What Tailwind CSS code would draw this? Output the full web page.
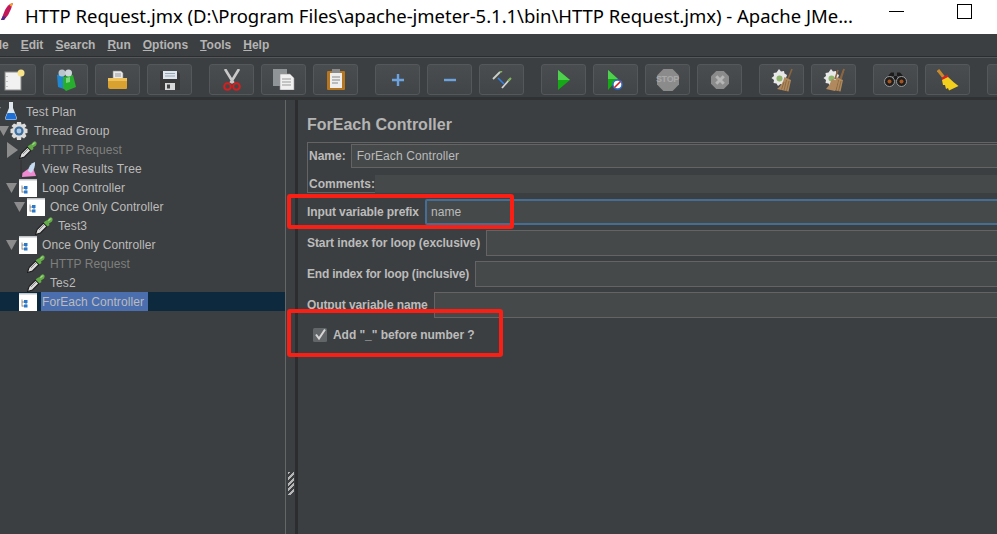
<!DOCTYPE html>
<html lang="en">
<head>
  <meta charset="UTF-8">
  <title>HTTP Request.jmx - Apache JMeter</title>
  <script src="https://cdn.jsdelivr.net/npm/@tailwindcss/browser@4"></script>
</head>
<body class="relative w-[997px] h-[534px] overflow-hidden bg-[#3c3f41] font-['Liberation_Sans',sans-serif] text-[12px] text-[#bbbbbb]">

  <!-- shared icons -->
  <svg class="hidden">
    <symbol id="dropper" viewBox="0 0 18 18">
      <path d="M0.5 17.5 L2 12.5 L8.5 6 L12 9.5 L5.5 16 Z" fill="#dcdcdc" stroke="#1c1c1c" stroke-width="1.1"/>
      <path d="M4 13 L9 8" stroke="#8e8e8e" stroke-width="1"/>
      <path d="M8.5 5.5 L12.5 9.5 L14.5 8 L14 6.5 L17 4.5 Q18.5 1.5 16.5 0.5 Q14.5 -0.3 12.5 3 L10.5 4 Z" fill="#62ab47"/>
      <path d="M13.5 4 Q14.5 2 16.3 1.8" stroke="#a8dc90" stroke-width="1.1" fill="none"/>
    </symbol>
    <symbol id="ctrl" viewBox="0 0 18 18">
      <rect x="0" y="0" width="18" height="18" fill="#ffffff"/>
      <rect x="0" y="0" width="18" height="1.5" fill="#bfc3c6"/>
      <path d="M3 6.5 V13.5 M3 9 H5 M3 13 H5" stroke="#7a7a7a" stroke-width="0.8" fill="none"/>
      <rect x="5" y="7" width="3.5" height="3" fill="#2b78c8"/>
      <rect x="5" y="11.5" width="3.5" height="3" fill="#2b78c8"/>
      <path d="M7 10 V11.5" stroke="#2b78c8" stroke-width="1"/>
    </symbol>
    <symbol id="tb-disabled-octagon" viewBox="0 0 24 24">
      <path d="M7 0 H17 L24 7 V17 L17 24 H7 L0 17 V7 Z" fill="#8b8b8b"/>
    </symbol>
    <symbol id="broom-gear" viewBox="0 0 22 24">
      <path d="M8 1 L10 3.5 L13 3 L13.5 5.5 L16 7 L15 10 L16 13 L13.5 14 L12.5 17 L9.5 16 L7 18 L5.5 15.5 L2.5 15 L3 12 L0.5 10 L3 8 L2.5 5 L5.5 4.5 Z" fill="#e8e8e8"/>
      <circle cx="8.5" cy="10.5" r="3" fill="#8fb56a"/>
      <path d="M21 1 L17 11" stroke="#8a6540" stroke-width="1.6"/>
      <path d="M13.5 9 L20 12 L17.5 23.5 L6 21 Q11.5 17 13.5 9 Z" fill="#b08a5e"/>
      <path d="M13 14 L10.5 21.5 M15.5 12 L13 22.5 M18 13 L15.5 23" stroke="#84623c" stroke-width="0.8"/>
    </symbol>
  </svg>

  <!-- Title bar -->
  <div class="flex items-center h-[34px] bg-white text-black">
    <svg class="w-[14px] h-[22px] shrink-0 -mt-[6px]" viewBox="0 0 14 22">
      <path d="M13 0 Q8 1 5 7 L1 17 L4 17 Q9 12 11 6 Z" fill="#c2185b"/>
      <path d="M13 0 Q11 0 9.5 2 L11.5 4 Z" fill="#f5a623"/>
      <path d="M3 13 L1 17 L4 17 L6 14 Z" fill="#4a2a8a"/>
    </svg>
    <span class="ml-[11px] w-[831px] whitespace-nowrap font-['Noto_Sans',sans-serif] text-[18.5px] tracking-[-0.03px] leading-none -mt-[1px]">HTTP Request.jmx (D:\Program Files\apache-jmeter-5.1.1\bin\HTTP Request.jmx) - Apache JMe...</span>
    <div class="ml-[33px] w-[15px] h-px bg-black -mt-[11px]"></div>
    <div class="ml-[53px] w-[15px] h-[15px] border border-black -mt-[11px]"></div>
  </div>

  <!-- Menu bar -->
  <div class="flex items-center h-[23px] border-b border-[#2b2d2f] font-bold text-[#b4b4b4] whitespace-nowrap">
    <span class="-ml-[12px]"><span class="underline">F</span>ile</span>
    <span class="ml-[12px]"><span class="underline">E</span>dit</span>
    <span class="ml-[12px]"><span class="underline">S</span>earch</span>
    <span class="ml-[12px]"><span class="underline">R</span>un</span>
    <span class="ml-[12px]"><span class="underline">O</span>ptions</span>
    <span class="ml-[12px]"><span class="underline">T</span>ools</span>
    <span class="ml-[12px]"><span class="underline">H</span>elp</span>
  </div>

  <!-- Toolbar -->
  <div class="flex items-center h-[43px] pt-[4px] border-t border-[#55585a] border-b-[3px] border-b-[#2f3133] -ml-[9px] w-[1020px] overflow-hidden">
    <button class="flex items-center justify-center w-[45px] h-[31px] shrink-0 rounded-[3px] border border-[#55585a] bg-linear-to-b from-[#4a4d4f] to-[#424547]">
      <svg class="w-[22px] h-[22px] ml-[3px]" viewBox="0 0 22 22"><rect x="1" y="3" width="16" height="18" fill="#f1f1f1" stroke="#8a8a8a"/><path d="M3 7v1M3 12v1M3 17v1" stroke="#999"/><circle cx="17" cy="4" r="3.5" fill="#f7e48a"/></svg>
    </button>
    <button class="flex items-center justify-center w-[45px] h-[31px] shrink-0 ml-[7px] rounded-[3px] border border-[#55585a] bg-linear-to-b from-[#4a4d4f] to-[#424547]">
      <svg class="w-[20px] h-[22px]" viewBox="0 0 20 22"><path d="M1 6 L8 4 L8 20 L2 18 Z" fill="#1f86cf"/><path d="M7 8 L17 6 L20 18 L10 22 L7 19 Z" fill="#27ae2e"/><circle cx="6" cy="4" r="3.5" fill="#b9c4cc"/><circle cx="12.5" cy="4" r="3.5" fill="#cfd6da"/><path d="M10 9 L14 8 L14 13 L10 14 Z" fill="#79d67d"/></svg>
    </button>
    <button class="flex items-center justify-center w-[45px] h-[31px] shrink-0 ml-[7px] rounded-[3px] border border-[#55585a] bg-linear-to-b from-[#4a4d4f] to-[#424547]">
      <svg class="w-[20px] h-[20px]" viewBox="0 0 20 20"><path d="M5 1 H13 L15 3 V10 H5 Z" fill="#e9e9e9" stroke="#888" stroke-width="0.6"/><path d="M7 4H13M7 6H13" stroke="#999"/><path d="M0 8 H19 V18 Q19 19 18 19 H2 Q0 19 0 17 Z" fill="#d9a12f"/><path d="M0 8 H19 V11 H0 Z" fill="#efc15a"/></svg>
    </button>
    <button class="flex items-center justify-center w-[45px] h-[31px] shrink-0 ml-[7px] rounded-[3px] border border-[#55585a] bg-linear-to-b from-[#4a4d4f] to-[#424547]">
      <svg class="w-[20px] h-[20px]" viewBox="0 0 20 20"><path d="M0 1 H17 L20 4 V20 H0 Z" fill="#3a3a3a"/><rect x="3" y="1" width="14" height="8" fill="#dfe6ee"/><path d="M5 3.5H15M5 6H15" stroke="#9aa6b2"/><rect x="5" y="13" width="10" height="7" fill="#d8d8d8"/><rect x="7" y="14.5" width="3" height="4" fill="#444"/></svg>
    </button>

    <button class="flex items-center justify-center w-[45px] h-[31px] shrink-0 ml-[17px] rounded-[3px] border border-[#55585a] bg-linear-to-b from-[#4a4d4f] to-[#424547]">
      <svg class="w-[18px] h-[22px]" viewBox="0 0 18 22"><path d="M2 0 L10.5 14 M16 0 L7.5 14" stroke="#c9c9c9" stroke-width="2.6"/><circle cx="4.5" cy="17.5" r="3.3" fill="none" stroke="#d81e1e" stroke-width="2"/><circle cx="13.5" cy="17.5" r="3.3" fill="none" stroke="#d81e1e" stroke-width="2"/></svg>
    </button>
    <button class="flex items-center justify-center w-[45px] h-[31px] shrink-0 ml-[7px] rounded-[3px] border border-[#55585a] bg-linear-to-b from-[#4a4d4f] to-[#424547]">
      <svg class="w-[22px] h-[21px]" viewBox="0 0 22 21"><rect x="0" y="0" width="14" height="17" fill="#8f9496"/><path d="M7 5 H17 L21 9 V21 H7 Z" fill="#f0f0f0" stroke="#999" stroke-width="0.6"/><path d="M9 10H18M9 13H18M9 16H18" stroke="#999"/></svg>
    </button>
    <button class="flex items-center justify-center w-[45px] h-[31px] shrink-0 ml-[7px] rounded-[3px] border border-[#55585a] bg-linear-to-b from-[#4a4d4f] to-[#424547]">
      <svg class="w-[18px] h-[21px]" viewBox="0 0 18 21"><rect x="0" y="2" width="18" height="19" rx="1" fill="#b5761f"/><rect x="3" y="4" width="12" height="15" fill="#eeeeee"/><rect x="5" y="0" width="8" height="4" fill="#8a8a8a"/><path d="M5 8H13M5 11H13M5 14H11" stroke="#888"/></svg>
    </button>

    <button class="flex items-center justify-center w-[45px] h-[31px] shrink-0 ml-[17px] rounded-[3px] border border-[#55585a] bg-linear-to-b from-[#4a4d4f] to-[#424547]">
      <svg class="w-[14px] h-[14px]" viewBox="0 0 14 14"><path d="M7 1V13M1 7H13" stroke="#6da2e0" stroke-width="2.4"/></svg>
    </button>
    <button class="flex items-center justify-center w-[45px] h-[31px] shrink-0 ml-[7px] rounded-[3px] border border-[#55585a] bg-linear-to-b from-[#4a4d4f] to-[#424547]">
      <svg class="w-[14px] h-[14px]" viewBox="0 0 14 14"><path d="M1 7H13" stroke="#6da2e0" stroke-width="2.4"/></svg>
    </button>
    <button class="flex items-center justify-center w-[45px] h-[31px] shrink-0 ml-[7px] rounded-[3px] border border-[#55585a] bg-linear-to-b from-[#4a4d4f] to-[#424547]">
      <svg class="w-[20px] h-[18px]" viewBox="0 0 20 18"><path d="M1 8 L8 1" stroke="#c9d0c9" stroke-width="1.8"/><path d="M8 1 L10 0" stroke="#7db35a" stroke-width="2"/><path d="M6 7 L12 13" stroke="#2f7fe0" stroke-width="1.6"/><path d="M10 17 L18 8" stroke="#d4d4d4" stroke-width="1.8"/><path d="M16 10 L19 7" stroke="#7db35a" stroke-width="2"/></svg>
    </button>

    <button class="flex items-center justify-center w-[45px] h-[31px] shrink-0 ml-[17px] rounded-[3px] border border-[#55585a] bg-linear-to-b from-[#4a4d4f] to-[#424547]">
      <svg class="w-[12px] h-[20px]" viewBox="0 0 12 20"><path d="M0 0 L12 10 L0 20 Z" fill="#16a816"/><path d="M0 0 L12 10 L0 10 Z" fill="#4fd04f"/></svg>
    </button>
    <button class="flex items-center justify-center w-[45px] h-[31px] shrink-0 ml-[7px] rounded-[3px] border border-[#55585a] bg-linear-to-b from-[#4a4d4f] to-[#424547]">
      <svg class="w-[15px] h-[20px]" viewBox="0 0 15 20"><path d="M0 0 L10 9 L0 20 Z" fill="#16a816"/><path d="M0 0 L10 9 L0 9 Z" fill="#4fd04f"/><circle cx="9.5" cy="14.5" r="4.5" fill="#fff" stroke="#2f6fd0" stroke-width="1.4"/><path d="M6.5 17.5 L12.5 11.5" stroke="#d81e1e" stroke-width="1.6"/></svg>
    </button>
    <button class="flex items-center justify-center w-[45px] h-[31px] shrink-0 ml-[7px] rounded-[3px] border border-[#55585a] bg-linear-to-b from-[#4a4d4f] to-[#424547] relative">
      <svg class="w-[22px] h-[22px]"><use href="#tb-disabled-octagon"/></svg>
      <span class="absolute inset-0 flex items-center justify-center text-[9px] font-bold tracking-[-0.3px] text-[#a8a8a8]">STOP</span>
    </button>
    <button class="flex items-center justify-center w-[45px] h-[31px] shrink-0 ml-[7px] rounded-[3px] border border-[#55585a] bg-linear-to-b from-[#4a4d4f] to-[#424547]">
      <svg class="w-[18px] h-[18px]" viewBox="0 0 24 24"><path d="M7 0 H17 L24 7 V17 L17 24 H7 L0 17 V7 Z" fill="#8b8b8b"/><path d="M7 7 L17 17 M17 7 L7 17" stroke="#b5b5b5" stroke-width="4"/></svg>
    </button>

    <button class="flex items-center justify-center w-[45px] h-[31px] shrink-0 ml-[17px] rounded-[3px] border border-[#55585a] bg-linear-to-b from-[#4a4d4f] to-[#424547]">
      <svg class="w-[22px] h-[24px]"><use href="#broom-gear"/></svg>
    </button>
    <button class="flex items-center justify-center w-[45px] h-[31px] shrink-0 ml-[7px] rounded-[3px] border border-[#55585a] bg-linear-to-b from-[#4a4d4f] to-[#424547]">
      <svg class="w-[22px] h-[24px]" viewBox="0 0 22 24"><use href="#broom-gear"/><path d="M15 2 L12 11 M21 1 L18 11" stroke="#8a6540" stroke-width="1.6"/><path d="M9 11 L15 13 L12 23 L3 21 Q7 17 9 11 Z" fill="#b08a5e"/></svg>
    </button>

    <button class="flex items-center justify-center w-[45px] h-[31px] shrink-0 ml-[17px] rounded-[3px] border border-[#55585a] bg-linear-to-b from-[#4a4d4f] to-[#424547]">
      <svg class="w-[23px] h-[15px]" viewBox="0 0 23 15"><path d="M4 4 L7 0.5 H10 V8 H13 V0.5 H16 L19 4 Z" fill="#1c1c1c"/><circle cx="5.5" cy="9.5" r="5" fill="#1e1e1e" stroke="#9a9a9a" stroke-width="1"/><circle cx="17.5" cy="9.5" r="5" fill="#1e1e1e" stroke="#9a9a9a" stroke-width="1"/><circle cx="5.5" cy="9.5" r="2" fill="#a8521e"/><circle cx="17.5" cy="9.5" r="2" fill="#a8521e"/></svg>
    </button>
    <button class="flex items-center justify-center w-[45px] h-[31px] shrink-0 ml-[7px] rounded-[3px] border border-[#55585a] bg-linear-to-b from-[#4a4d4f] to-[#424547]">
      <svg class="w-[22px] h-[22px]" viewBox="0 0 22 22"><path d="M1 1 L6.5 8" stroke="#c98a2b" stroke-width="3"/><path d="M5 10 L11 7" stroke="#d8202a" stroke-width="2.6"/><path d="M5 11 L11 8 Q16 13 21.5 17 L12 21.5 L11 19 L9 20 L8 16 L6 16 Z" fill="#f2cf1d"/></svg>
    </button>
    <button class="w-[45px] h-[31px] shrink-0 ml-[17px] rounded-[3px] border border-[#55585a] bg-linear-to-b from-[#4a4d4f] to-[#424547]"></button>
  </div>

  <!-- Main split -->
  <div class="flex h-[434px]">
    <!-- Tree -->
    <div class="w-[285px] shrink-0 pt-[2px] overflow-hidden tracking-[0.07px]">
      <div class="flex items-center h-[19px] pl-[5px] -ml-[16px]">
        <svg class="w-[13px] h-[10px] shrink-0" viewBox="0 0 13 10"><path d="M1 0 H12 L6.5 10 Z" fill="#8c8c8c"/></svg>
        <svg class="w-[18px] h-[18px] shrink-0 -mt-[2px]" viewBox="0 0 18 18"><path d="M7 0 H11 V6 L15 16 Q15 18 13 18 H5 Q3 18 3 16 L7 6 Z" fill="#dfe6ee"/><path d="M5.5 11 H12.5 L14.5 16 Q14.5 17.5 13 17.5 H5 Q3.5 17.5 3.5 16 Z" fill="#1d6fd6"/></svg>
        <span class="ml-[5px] px-px">Test Plan</span>
      </div>
      <div class="flex items-center h-[19px] pl-[5px] -ml-[8px]">
        <svg class="w-[13px] h-[10px] shrink-0" viewBox="0 0 13 10"><path d="M1 0 H12 L6.5 10 Z" fill="#8c8c8c"/></svg>
        <svg class="w-[18px] h-[18px] shrink-0" viewBox="0 0 18 18"><path d="M7 0H11L11.5 2.5L14.5 1.5L16.5 4L14.5 6L17.5 7V11L15 11.5L16.5 14L14 16.5L11.5 15L11 18H7L6.5 15L4 16.5L1.5 14L3 11.5L0.5 11V7L3.5 6L1.5 4L4 1.5L6.5 2.5Z" fill="#dcdcdc"/><circle cx="9" cy="9" r="4.6" fill="#3f6f9f"/><circle cx="9" cy="9" r="2.4" fill="#a9c8e6"/></svg>
        <span class="ml-[5px] px-px">Thread Group</span>
      </div>
      <div class="flex items-center h-[19px] pl-[7px]">
        <svg class="w-[13px] h-[16px] shrink-0" viewBox="0 0 13 16"><path d="M0 0 L11 8 L0 16 Z" fill="#8c8c8c"/></svg>
        <svg class="w-[18px] h-[18px] shrink-0 -ml-[1px]"><use href="#dropper"/></svg>
        <span class="ml-[4px] px-px text-[#7f7f7f]">HTTP Request</span>
      </div>
      <div class="flex items-center h-[19px] pl-[18px]">
        <svg class="w-[18px] h-[18px] shrink-0 ml-[2px]" viewBox="0 0 18 18"><path d="M1 0 V17 H18" stroke="#2d2d2d" fill="none" stroke-width="0.8"/><path d="M2 17 L2.5 13 L8 9 L13 8 L16 16 Z" fill="#f08ad0"/><path d="M8 11 Q9 4 15 2 Q15.5 9 11 13 Z" fill="#c5dcf2"/></svg>
        <span class="ml-[3px] px-px tracking-[0.2px]">View Results Tree</span>
      </div>
      <div class="flex items-center h-[19px] pl-[5px]">
        <svg class="w-[13px] h-[10px] shrink-0" viewBox="0 0 13 10"><path d="M1 0 H12 L6.5 10 Z" fill="#8c8c8c"/></svg>
        <svg class="w-[18px] h-[18px] shrink-0 ml-px"><use href="#ctrl"/></svg>
        <span class="ml-[4px] px-px">Loop Controller</span>
      </div>
      <div class="flex items-center h-[19px] pl-[13px]">
        <svg class="w-[13px] h-[10px] shrink-0" viewBox="0 0 13 10"><path d="M1 0 H12 L6.5 10 Z" fill="#8c8c8c"/></svg>
        <svg class="w-[18px] h-[18px] shrink-0 ml-px"><use href="#ctrl"/></svg>
        <span class="ml-[4px] px-px">Once Only Controller</span>
      </div>
      <div class="flex items-center h-[19px] pl-[35px]">
        <svg class="w-[18px] h-[18px] shrink-0"><use href="#dropper"/></svg>
        <span class="ml-[4px] px-px">Test3</span>
      </div>
      <div class="flex items-center h-[19px] pl-[5px]">
        <svg class="w-[13px] h-[10px] shrink-0" viewBox="0 0 13 10"><path d="M1 0 H12 L6.5 10 Z" fill="#8c8c8c"/></svg>
        <svg class="w-[18px] h-[18px] shrink-0 ml-px"><use href="#ctrl"/></svg>
        <span class="ml-[4px] px-px">Once Only Controller</span>
      </div>
      <div class="flex items-center h-[19px] pl-[27px]">
        <svg class="w-[18px] h-[18px] shrink-0"><use href="#dropper"/></svg>
        <span class="ml-[4px] px-px text-[#7f7f7f]">HTTP Request</span>
      </div>
      <div class="flex items-center h-[19px] pl-[27px]">
        <svg class="w-[18px] h-[18px] shrink-0"><use href="#dropper"/></svg>
        <span class="ml-[4px] px-px">Tes2</span>
      </div>
      <div class="flex items-center h-[19px] pl-[19px] bg-[#0d293e]">
        <svg class="w-[18px] h-[18px] shrink-0"><use href="#ctrl"/></svg>
        <span class="ml-[4px] px-px h-[19px] leading-[20px] w-[107px] bg-[#4b6eaf]">ForEach Controller</span>
      </div>
    </div>

    <!-- Split divider -->
    <div class="relative w-[13px] shrink-0 border-l border-[#646768]">
      <div class="absolute right-0 top-0 bottom-0 w-[3px] bg-[#2b2d2f]"></div>
      <div class="absolute left-[2px] top-[372px] w-[6px] h-[23px] bg-[repeating-linear-gradient(135deg,#b5b5b5_0_2px,#3c3f41_2px_4px)]"></div>
    </div>

    <!-- Controller panel -->
    <div class="flex-1 min-w-0 pl-[9px] font-bold overflow-hidden">
      <h1 class="h-[42px] pt-[15px] text-[16px] leading-[20px] font-bold text-[#b4b4b4] whitespace-nowrap">ForEach Controller</h1>
      <div class="h-[51px] w-[800px] border border-[#646464] border-r-0 pl-px">
        <div class="flex items-center h-[25px] pt-px">
          <span>Name:</span>
          <div class="ml-[5px] flex-1 h-[24px] border border-[#646464] bg-[#45494a] px-[5px] leading-[22px] font-normal tracking-[0.1px]">ForEach Controller</div>
        </div>
        <div class="flex items-center h-[24px] mt-px pt-[6px]">
          <span>Comments:</span>
          <div class="flex-1 h-[18px] bg-[#45494a]"></div>
        </div>
      </div>
      <div class="flex items-center h-[26px] mt-[6px] w-[800px]">
        <span class="tracking-[-0.1px]">Input variable prefix</span>
        <div class="ml-[6px] flex-1 h-[26px] rounded-[2px] border-2 border-[#466d94] bg-[#45494a] px-[4px] leading-[22px] font-normal tracking-[0.1px]">name</div>
      </div>
      <div class="flex items-center h-[26px] mt-[5px] w-[800px]">
        <span class="tracking-[-0.07px]">Start index for loop (exclusive)</span>
        <div class="ml-[6px] flex-1 h-[26px] border border-[#646464] bg-[#45494a]"></div>
      </div>
      <div class="flex items-center h-[26px] mt-[5px] w-[800px]">
        <span class="tracking-[-0.2px]">End index for loop (inclusive)</span>
        <div class="ml-[6px] flex-1 h-[26px] border border-[#646464] bg-[#45494a]"></div>
      </div>
      <div class="flex items-center h-[26px] mt-[5px] w-[800px]">
        <span class="tracking-[-0.1px]">Output variable name</span>
        <div class="ml-[6px] flex-1 h-[26px] border border-[#646464] bg-[#45494a]"></div>
      </div>
      <div class="flex items-center mt-[8px] ml-[6px]">
        <svg class="w-[14px] h-[14px] shrink-0" viewBox="0 0 14 14"><rect width="14" height="14" rx="1.5" fill="#636668"/><path d="M3 6.5 L6 10.5 L12 1.5" fill="none" stroke="#d6d6d6" stroke-width="2"/></svg>
        <span class="ml-[6px] tracking-[-0.05px]">Add "_" before number ?</span>
      </div>
    </div>
  </div>

  <!-- Red annotations drawn over the screenshot -->
  <div class="absolute left-[287px] top-[194px] w-[227px] h-[35px] rounded-[3px] border-[4px] border-[#fa1f14]"></div>
  <div class="absolute left-[287px] top-[309px] w-[216px] h-[48px] rounded-[3px] border-[4px] border-[#fa1f14]"></div>
</body>
</html>
